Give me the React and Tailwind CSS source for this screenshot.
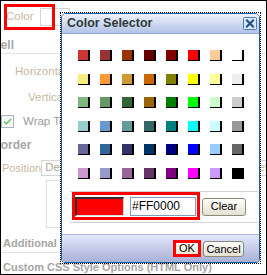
const SWATCHES = [
  ["#cf3434", "#993333", "#993300", "#660000", "#800000", "#ff0000", "#ffcc99", "#ffffff"],
  ["#f6ee7c", "#ff9933", "#cc9933", "#cc6600", "#808000", "#ffff00", "#ffff99", "#eeeeee"],
  ["#7fb77e", "#669966", "#336633", "#996600", "#008000", "#00ff00", "#ccffcc", "#cccccc"],
  ["#99cccc", "#6699cc", "#669999", "#336666", "#008080", "#00ffff", "#ccffff", "#999999"],
  ["#666699", "#336699", "#333366", "#003366", "#000080", "#0000ff", "#99ccff", "#666666"],
  ["#cc99cc", "#9999cc", "#996699", "#663366", "#800080", "#ff00ff", "#cc99ff", "#000000"],
];

function Button({ children, className = "" }) {
  return (
    <div
      className={[
        "flex items-center justify-center rounded-[3px] border border-[#8a8a7c] bg-linear-to-b from-[#fefefc] to-[#e4e1d1] text-[11px] leading-none text-black",
        className,
      ].join(" ")}
    >
      {children}
    </div>
  );
}

function Dialog() {
  return (
    <div className="absolute left-[59px] top-[11px] w-[201px] h-[252px] border border-dotted border-black">
      <div className="h-full flex flex-col border border-[#1d5b98] rounded-t-[5px] rounded-b-[4px] bg-white overflow-hidden">
        {/* Title bar */}
        <div className="h-[20px] flex-shrink-0 flex items-center pl-[5px] pr-[2px] border-b border-[#98a8d6] bg-linear-to-b from-[#eef2fa] to-[#b3c3e7]">
          <span className="text-[12.5px] font-bold text-[#2e3939] leading-none">Color Selector</span>
          <svg className="ml-auto" width="14" height="13" viewBox="0 0 14 13" fill="none">
            <rect x="0.5" y="0.5" width="13" height="12" rx="1" fill="#dbe6f6" stroke="#4a7cbf" />
            <path d="M4 3.5l6 6M10 3.5l-6 6" stroke="#22508f" strokeWidth="2.2" strokeLinecap="square" />
          </svg>
        </div>

        {/* Body */}
        <div className="flex-1 flex flex-col pt-[16px]">
          <div className="ml-[16px] grid grid-cols-[repeat(8,12px)] gap-x-[10px] gap-y-[12.6px]">
            {SWATCHES.flat().map((c, i) => (
              <div
                key={i}
                className="w-[12px] h-[11px] border-r-2 border-b border-black"
                style={{ backgroundColor: c }}
              />
            ))}
          </div>

          <div className="mt-[12px] ml-[8px] mr-[1px] pl-[2px] pb-[2px] flex items-start border-t border-b border-[#d2d2d2]">
            <div className="w-[128px] h-[28px] border-[3px] border-[#ff0000] flex items-start pt-[2px]">
              <div className="w-[49px] h-[19px] bg-[#ff0000] border-t-2 border-l-2 border-r border-b border-t-[#303030] border-l-[#303030] border-r-[#dcdcdc] border-b-[#dcdcdc]" />
              <div className="ml-[6px] w-[66px] h-[19px] border border-[#7f9db9] flex items-center pl-[1px] text-[12px] leading-none text-black">
                #FF0000
              </div>
            </div>
            <Button className="ml-[2px] mt-[6px] w-[44px] h-[18px]">Clear</Button>
          </div>
        </div>

        {/* Footer */}
        <div className="h-[28px] flex-shrink-0 flex justify-end items-start gap-[2px] pt-[5px] pr-[15px] border-t border-[#a9b5dc] bg-linear-to-b from-[#e3e9fb] to-[#a8b0d7]">
          <div className="w-[28px] h-[17px] border-[3px] border-[#ff0000] bg-linear-to-b from-[#fefefc] to-[#ebe8da] flex items-center justify-center text-[11px] leading-none text-black">
            OK
          </div>
          <Button className="mt-[1px] w-[41px] h-[16px]">Cancel</Button>
        </div>
      </div>
    </div>
  );
}

export default function App() {
  return (
    <div className="relative w-[267px] h-[275px] border border-black bg-white overflow-hidden font-['Liberation_Sans',Arial,sans-serif]">
      {/* Page behind the dialog */}
      <div className="flex flex-col">
        <div className="flex items-center h-[18px] mt-[7px]">
          <span className="ml-[5px] w-[34px] text-[11.5px] text-[#c6b9a2]">Color</span>
          <div className="w-[30px] h-[18px] border border-[#d6d6d6]" />
        </div>

        <div className="mt-[12px] ml-[-9px] h-[15px] text-[12px] leading-[15px] font-bold text-[#a6a6a6] whitespace-nowrap">
          Cell
        </div>
        <div className="h-px bg-[#e2e2e2]" />

        <div className="mt-[10px] ml-[14px] h-[14px] text-[11.5px] leading-[14px] text-[#c6b9a2] whitespace-nowrap">
          Horizontal Align
        </div>
        <div className="mt-[12px] ml-[27px] h-[14px] text-[11.5px] leading-[14px] text-[#c6b9a2] whitespace-nowrap">
          Vertical Align
        </div>

        <div className="mt-[11px] flex items-center h-[13px]">
          <div className="w-[13px] h-[13px] border border-[#a9b4bf] bg-[#f6f8f8] flex items-center justify-center">
            <svg width="9" height="9" viewBox="0 0 9 9" fill="none">
              <path d="M1 4.5l2.3 2.3L8 2" stroke="#6cc46c" strokeWidth="1.6" />
            </svg>
          </div>
          <span className="ml-[9px] text-[11.5px] text-[#9c9c9c] whitespace-nowrap">Wrap Text</span>
        </div>

        <div className="mt-[10px] ml-[-9px] h-[14px] text-[12px] leading-[14px] font-bold text-[#a6a6a6] whitespace-nowrap">
          Border
        </div>

        <div className="mt-[8px] flex items-center h-[16px]">
          <span className="ml-[1px] w-[44px] text-[11px] text-[#c6b9a2]">Position</span>
          <div className="w-[200px] h-[16px] border border-[#d6d6d6] flex items-center pl-[3px] text-[11.5px] text-[#b0a898] flex-shrink-0">
            Default
          </div>
          <div className="ml-[6px] w-[40px] h-[16px] border border-[#d6d6d6] flex items-center pl-[2px] text-[11.5px] text-[#c6b9a2] flex-shrink-0">
            Default
          </div>
        </div>
        <div className="mt-[4px] ml-[45px] w-[200px] h-[48px] border border-[#e0e0e0]" />

        <div className="mt-[8px] ml-[2px] h-[15px] text-[11px] leading-[15px] font-bold text-[#a6a6a6] whitespace-nowrap">
          Additional
        </div>
        <div className="mt-[1px] h-px bg-[#e2e2e2]" />
        <div className="mt-[7px] ml-[2px] h-[14px] text-[11px] leading-[14px] font-bold text-[#a6a6a6] whitespace-nowrap">
          Custom CSS Style Options (HTML Only)
        </div>
      </div>

      {/* Annotation around the Color field */}
      <div className="absolute left-[3px] top-[3px] w-[51px] h-[26px] border-[3px] border-[#ff0000]" />

      <Dialog />
    </div>
  );
}
